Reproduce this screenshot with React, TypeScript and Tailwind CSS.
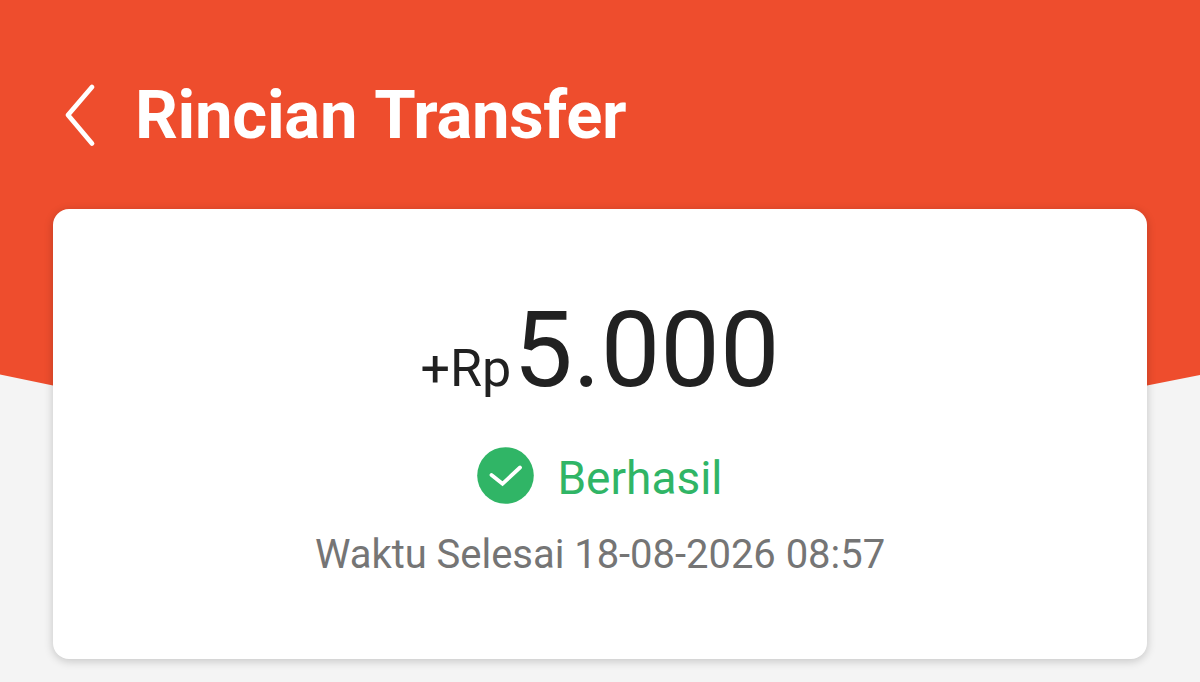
export default function App() {
  return (
    <main className="relative h-[682px] w-[1200px] overflow-hidden bg-[#f4f4f4] px-[53px] font-['Roboto',sans-serif]">
      <svg className="absolute left-0 top-0" width="1200" height="390" viewBox="0 0 1200 390" aria-hidden="true">
        <path d="M0 0H1200V375L1147 385.5H53L0 374.5Z" fill="#ee4d2d" />
      </svg>
      <header className="relative flex h-[209px] items-start pt-[76px] text-white">
        <button aria-label="Kembali" className="ml-[9px] mt-[7px] block">
          <svg width="36" height="66" viewBox="0 0 36 66" fill="none" stroke="currentColor" strokeWidth="4.8" strokeLinecap="round" strokeLinejoin="round">
            <path d="M30 4L6 32L30 60.5" />
          </svg>
        </button>
        <h1 className="ml-[37px] whitespace-nowrap text-[67px] leading-[78px] font-bold tracking-[-0.3px] [word-spacing:2.5px]">Rincian Transfer</h1>
      </header>
      <section className="relative flex h-[450px] flex-col items-center rounded-[16px] bg-white shadow-[0_2px_10px_rgba(0,0,0,0.2)]">
        <div className="flex h-[126px] items-baseline whitespace-nowrap pt-[78px] text-[#212121]">
          <span className="text-[52px] leading-[126px]">+Rp</span>
          <span className="ml-[2px] text-[106px] leading-[126px]">5.000</span>
        </div>
        <div className="mt-[112px] flex h-[57px] items-center gap-[23px] text-[#30b566]">
          <svg width="57" height="57" viewBox="0 0 57 57" aria-hidden="true">
            <circle cx="28.5" cy="28.5" r="28.3" fill="currentColor" />
            <path d="M14.5 28L25.5 36.8L43 20.5" fill="none" stroke="white" strokeWidth="3.8" strokeLinecap="round" />
          </svg>
          <span className="whitespace-nowrap pt-[5px] text-[46px] leading-[56px]">Berhasil</span>
        </div>
        <p className="mt-[27px] whitespace-nowrap text-[40px] leading-[48px] tracking-[-0.04px] text-[#757575]">Waktu Selesai 18-08-2026 08:57</p>
      </section>
    </main>
  );
}
